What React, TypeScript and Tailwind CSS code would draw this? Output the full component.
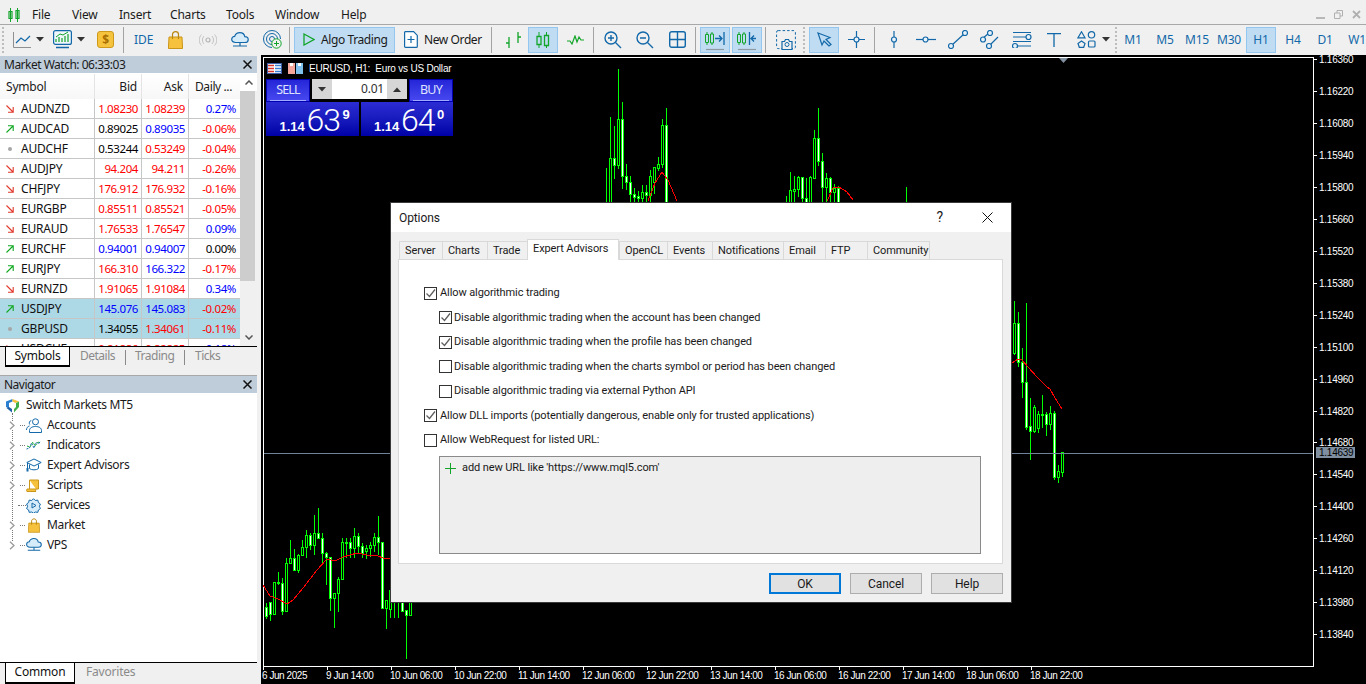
import type { ReactNode } from "react";

type Quote = [string, "up" | "down" | "dot", string, string, string, string, string, string];

const r = "text-[#ff0000]";
const b = "text-[#0000ff]";
const k = "text-black";

const quotes: Quote[] = [
  ["AUDNZD", "down", "1.08230", r, "1.08239", r, "0.27%", b],
  ["AUDCAD", "up", "0.89025", k, "0.89035", b, "-0.06%", r],
  ["AUDCHF", "dot", "0.53244", k, "0.53249", r, "-0.04%", r],
  ["AUDJPY", "down", "94.204", r, "94.211", r, "-0.26%", r],
  ["CHFJPY", "down", "176.912", r, "176.932", r, "-0.16%", r],
  ["EURGBP", "down", "0.85511", r, "0.85521", r, "-0.05%", r],
  ["EURAUD", "down", "1.76533", r, "1.76547", r, "0.09%", b],
  ["EURCHF", "up", "0.94001", b, "0.94007", b, "0.00%", k],
  ["EURJPY", "up", "166.310", r, "166.322", b, "-0.17%", r],
  ["EURNZD", "down", "1.91065", r, "1.91084", r, "0.34%", b],
  ["USDJPY", "up", "145.076", b, "145.083", b, "-0.02%", r],
  ["GBPUSD", "dot", "1.34055", k, "1.34061", r, "-0.11%", r],
  ["USDCHF", "down", "0.81886", r, "0.82885", r, "0.18%", b],
];

// x, wick top, wick bottom, body top, body bottom, white body
type Candle = [number, number, number, number, number, number];

const candles: Candle[] = [
  [266, 603, 619, 607, 616, 1], [270, 602, 621, 602, 614, 1], [274, 582, 615, 582, 614, 0],
  [278, 572, 585, 582, 583, 0], [282, 578, 615, 583, 611, 1], [286, 558, 612, 563, 611, 0],
  [290, 540, 564, 558, 563, 0], [294, 549, 571, 558, 570, 1], [298, 554, 573, 555, 570, 0],
  [302, 540, 556, 547, 555, 0], [306, 530, 558, 535, 547, 0], [310, 533, 550, 535, 545, 1],
  [314, 515, 555, 533, 545, 0], [318, 508, 538, 533, 538, 1], [322, 533, 563, 538, 553, 1],
  [326, 552, 585, 553, 557, 1], [330, 557, 611, 557, 598, 1], [334, 593, 628, 593, 598, 0],
  [338, 577, 612, 579, 593, 0], [342, 538, 580, 542, 579, 0], [346, 538, 558, 542, 543, 0],
  [350, 538, 558, 542, 548, 1], [354, 528, 558, 536, 548, 0], [358, 533, 553, 536, 546, 1],
  [362, 543, 558, 546, 553, 1], [366, 545, 559, 548, 551, 0], [370, 542, 557, 545, 548, 0],
  [374, 533, 552, 537, 545, 0], [378, 516, 555, 537, 542, 1], [382, 542, 609, 542, 608, 1],
  [386, 600, 629, 600, 608, 0], [390, 586, 618, 590, 609, 0], [402, 601, 612, 601, 611, 1],
  [406, 610, 659, 610, 615, 1], [410, 601, 616, 601, 615, 0],
  [610, 117, 210, 158, 210, 0], [614, 126, 179, 158, 165, 1], [618, 69, 169, 119, 165, 0],
  [622, 102, 189, 119, 176, 1], [626, 164, 190, 176, 182, 1], [630, 176, 205, 182, 194, 1],
  [634, 188, 205, 194, 197, 1], [638, 191, 205, 196, 198, 1], [642, 185, 205, 192, 198, 0],
  [646, 185, 205, 192, 195, 1], [650, 170, 205, 176, 195, 0], [654, 167, 194, 167, 182, 0],
  [658, 157, 171, 164, 168, 0], [662, 119, 168, 125, 164, 0], [666, 108, 205, 125, 205, 1],
  [790, 172, 205, 190, 205, 0], [794, 176, 205, 189, 191, 0], [798, 176, 197, 177, 189, 0],
  [802, 177, 205, 177, 198, 1], [806, 178, 205, 198, 205, 1], [810, 176, 205, 177, 205, 0],
  [814, 130, 178, 138, 178, 0], [818, 108, 166, 138, 161, 1], [822, 153, 205, 161, 187, 1],
  [826, 173, 205, 178, 187, 0], [830, 177, 205, 178, 192, 1], [834, 184, 205, 188, 192, 0],
  [838, 186, 205, 188, 205, 1],
  [1014, 301, 355, 323, 353, 0], [1018, 312, 367, 323, 362, 1], [1022, 348, 398, 362, 382, 1],
  [1026, 303, 430, 382, 427, 1], [1030, 398, 460, 426, 431, 1], [1034, 405, 433, 407, 431, 0],
  [1038, 411, 433, 414, 428, 0], [1042, 395, 428, 414, 415, 0], [1046, 412, 436, 414, 424, 1],
  [1050, 406, 430, 413, 424, 0], [1054, 411, 480, 413, 477, 1], [1058, 465, 483, 471, 477, 0],
  [1062, 452, 477, 452, 472, 0],
];

const wicks = [[606, 168, 205], [786, 196, 205], [906, 187, 205], [394, 601, 618], [398, 601, 618]];

const maLines = [
  "263,585 270,596 278,599 287,604 293,600 303,588 317,570 327,559 335,561 343,557 357,553 367,555 378,556 383,558 392,558",
  "648,201 655,183 662,172 668,180 677,201",
  "827,201 833,188 839,187 847,192 853,200",
  "1012,363 1018,359 1022,360 1028,367 1037,377 1047,387 1050,389 1055,398 1062,409",
];

const prices = [
  ["1.16360", 59], ["1.16220", 91], ["1.16080", 123], ["1.15940", 155], ["1.15800", 187],
  ["1.15660", 219], ["1.15520", 251], ["1.15380", 283], ["1.15240", 315], ["1.15100", 347],
  ["1.14960", 379], ["1.14820", 411], ["1.14680", 442], ["1.14540", 474], ["1.14400", 506],
  ["1.14260", 538], ["1.14120", 570], ["1.13980", 602], ["1.13840", 634],
] as const;

const times = [
  ["6 Jun 2025", 262], ["9 Jun 14:00", 326], ["10 Jun 06:00", 390], ["10 Jun 22:00", 454],
  ["11 Jun 14:00", 518], ["12 Jun 06:00", 582], ["12 Jun 22:00", 646], ["13 Jun 14:00", 710],
  ["16 Jun 06:00", 774], ["16 Jun 22:00", 838], ["17 Jun 14:00", 902], ["18 Jun 06:00", 966],
  ["18 Jun 22:00", 1030],
] as const;

const BLUE = "#1268a8";
const GREEN = "#12a52a";

const Ico = ({ w, h = w, children, className }: { w: number; h?: number; children: ReactNode; className?: string }) => (
  <svg width={w} height={h} viewBox={`0 0 ${w} ${h}`} fill="none" className={`shrink-0 ${className ?? ""}`}>
    {children}
  </svg>
);

const Caret = ({ className }: { className?: string }) => (
  <Ico w={8} h={5} className={className}>
    <path d="M0 0h8L4 4.500z" fill="#333" />
  </Ico>
);

const Sep = ({ className }: { className?: string }) => <div className={`w-px h-[26px] shrink-0 bg-[#a3a3a3] ${className ?? ""}`} />;

const Grip = ({ className }: { className?: string }) => (
  <div className={`w-0.5 h-[26px] shrink-0 border-l-2 border-dotted border-[#bdbdbd] ${className ?? ""}`} />
);

const Tool = ({ active, children, className }: { active?: boolean; children: ReactNode; className?: string }) => (
  <div
    className={`w-[30px] h-[26px] shrink-0 flex items-center justify-center border ${
      active ? "bg-[#bfdcf3] border-[#93c7f0]" : "border-transparent"
    } ${className ?? ""}`}
  >
    {children}
  </div>
);

const Candles = () => (
  <Ico w={14} h={16}>
    <path d="M3 0v16M10.500 0v16" stroke={GREEN} />
    <path d="M1 4.500h4v8H1zM8.500 3.500h4v10h-4z" stroke={GREEN} strokeWidth="1.300" fill="#bfdcf3" />
  </Ico>
);

const ShiftIcon = ({ left }: { left?: boolean }) => (
  <Ico w={20} h={22}>
    <path d="M2 3v13M7 3v13" stroke={GREEN} />
    <path d="M.5 5.500h3v8h-3zM5.500 5h3v9h-3z" stroke={GREEN} fill="#bfdcf3" />
    {left ? (
      <path d="M12.500 3v13M19 9.500h-5M17 6.500l-3 3 3 3" stroke={BLUE} strokeWidth="1.300" />
    ) : (
      <path d="M19 3v13M10 9.500h6M14 6.500l3 3-3 3" stroke={BLUE} strokeWidth="1.300" />
    )}
    <path d="M1 20.500h18" stroke="#8f9aa3" strokeWidth="1.200" />
  </Ico>
);

const Magnifier = ({ plus }: { plus?: boolean }) => (
  <Ico w={18} h={18}>
    <circle cx="7" cy="7" r="6" stroke={BLUE} strokeWidth="1.400" />
    <path d="M11.500 11.500l5.500 5.500M4 7h6" stroke={BLUE} strokeWidth="1.400" />
    {plus && <path d="M7 4v6" stroke={BLUE} strokeWidth="1.400" />}
  </Ico>
);

const CloudIcon = ({ w = 18 }: { w?: number }) => (
  <svg width={w} height={16} viewBox="0 0 18 16" fill="none" className="shrink-0">
    <path
      d="M4.500 10.500C2 10.500.7 9 .7 7.300c0-1.800 1.400-3 3-3C4.500 2 6.500.7 8.800.7c2.700 0 4.600 1.800 5 4 1.900 0 3.400 1.300 3.400 3s-1.400 2.800-3.200 2.800z"
      fill="#d7ecfa"
      stroke={BLUE}
      strokeWidth="1.200"
    />
    <path d="M9 10.500v3M2 14h14" stroke={BLUE} strokeWidth="1.200" />
  </svg>
);

const Bag = ({ w = 15, h = 18 }: { w?: number; h?: number }) => (
  <svg width={w} height={h} viewBox="0 0 15 18" className="shrink-0">
    <path d="M1 6h13l.6 11.500H.4z" fill="#f6c23e" stroke="#c9951a" />
    <path d="M4.500 8V3.500C4.500 1.800 5.800.7 7.500.7s3 1.100 3 2.800V8" fill="none" stroke="#b8860b" strokeWidth="1.200" />
  </svg>
);

const Dot = ({ x, y }: { x: number; y: number }) => <circle cx={x} cy={y} r="2.500" stroke={BLUE} strokeWidth="1.200" fill="#e8f2fa" />;

const Toolbar = () => (
  <div className="h-[30px] flex items-center shrink-0 border-t-[1px] border-[#a8a8a8]">
    <Grip className="ml-[2px]" />
    <Ico w={18} h={16} className="ml-[9px]">
      <path d="M.5 0v15.500H18" stroke="#8f8f8f" />
      <path d="M3 11l5-5 4 3 5-5" stroke={BLUE} strokeWidth="1.200" />
    </Ico>
    <Caret className="ml-[5px]" />
    <Ico w={19} h={19} className="ml-[9px]">
      <rect x=".6" y=".6" width="17.800" height="13.800" rx="2" fill="#eef6fc" stroke={BLUE} strokeWidth="1.200" />
      <path d="M3 12V9M6 12V7M9 12V8M12 12V6M15 12V4" stroke={GREEN} strokeWidth="1.200" />
      <path d="M3 7l4-3 3 1 5-3" stroke={GREEN} />
      <path d="M3 17.500h13" stroke={BLUE} strokeWidth="1.500" />
    </Ico>
    <Caret className="ml-[5px]" />
    <div className="ml-[12px] w-[17px] h-[17px] shrink-0 rounded-[3px] bg-[#f6c33f] border border-[#cf9a1c] flex items-center justify-center text-[12px] font-bold text-[#a86f00] leading-none">
      $
    </div>
    <Sep className="ml-[9px]" />
    <span className="ml-[10px] w-[18px] text-[12px] text-[#1268a8] tracking-normal">IDE</span>
    <div className="ml-[16px]">
      <Bag />
    </div>
    <Ico w={18} h={12} className="ml-[16px]">
      <circle cx="9" cy="6" r="2" stroke="#b5b5b5" strokeWidth="1.200" />
      <path d="M5 2c-2 2-2 6 0 8M13 2c2 2 2 6 0 8M2.500 .5c-3 3-3 8 0 11M15.500 .5c3 3 3 8 0 11" stroke="#c2c2c2" />
    </Ico>
    <div className="ml-[14px]">
      <CloudIcon />
    </div>
    <Ico w={19} h={19} className="ml-[14px]">
      <path d="M9 17.500A8.500 8.500 0 1 1 17.500 9M9 14.500A5.500 5.500 0 1 1 14.500 9" stroke={BLUE} />
      <path d="M9 11.500A2.500 2.500 0 1 1 11.500 9" stroke={BLUE} />
      <circle cx="13.500" cy="13.500" r="4.700" fill="#f0f0f0" stroke={GREEN} />
      <path d="M13.500 11v5M11 13.500h5" stroke={GREEN} />
    </Ico>
    <Sep className="ml-[7px]" />
    <div className="ml-[4px] w-[101px] h-[26px] shrink-0 bg-[#bfdcf3] border border-[#93c7f0] flex items-center">
      <Ico w={12} h={13} className="ml-[8px]">
        <path d="M1 1l10 5.500L1 12z" stroke={GREEN} strokeWidth="1.300" />
      </Ico>
      <span className="ml-[6px] tracking-[-0.4px]">Algo Trading</span>
    </div>
    <Ico w={14} h={17} className="ml-[9px]">
      <path d="M1.600.7h8l3.700 3.700v11a1 1 0 0 1-1 1H1.600a1 1 0 0 1-1-1v-14a1 1 0 0 1 1-.700z" stroke={BLUE} strokeWidth="1.200" fill="#fff" />
      <path d="M7 5v7M3.500 8.500h7" stroke={BLUE} strokeWidth="1.200" />
    </Ico>
    <span className="ml-[6px] w-[57px] shrink-0 whitespace-nowrap tracking-[-0.4px]">New Order</span>
    <Sep className="ml-[10px]" />
    <Tool className="ml-[5px]">
      <Ico w={17} h={17}>
        <path d="M5 6v11M2 12h3M14 1v11M14 6h3" stroke={GREEN} strokeWidth="1.300" />
      </Ico>
    </Tool>
    <Tool active className="ml-px">
      <Candles />
    </Tool>
    <Tool className="ml-[2px]">
      <Ico w={17} h={10}>
        <path d="M0 6h3l2 3 3-8 2 6 2-5 2 3h3" stroke={GREEN} strokeWidth="1.200" />
      </Ico>
    </Tool>
    <Sep className="ml-[3px]" />
    <Tool className="ml-[4px]">
      <Magnifier plus />
    </Tool>
    <Tool className="ml-[2px]">
      <Magnifier />
    </Tool>
    <Tool className="ml-[2px]">
      <Ico w={17} h={17}>
        <rect x=".7" y=".7" width="15.600" height="15.600" rx="2" stroke={BLUE} strokeWidth="1.400" />
        <path d="M8.500 1v15M1 8.500h15" stroke={BLUE} strokeWidth="1.400" />
      </Ico>
    </Tool>
    <Sep className="ml-[3px]" />
    <Tool active className="ml-[4px]">
      <ShiftIcon />
    </Tool>
    <Tool active className="ml-[2px]">
      <ShiftIcon left />
    </Tool>
    <Sep className="ml-[3px]" />
    <Tool className="ml-[5px]">
      <Ico w={20} h={20}>
        <rect x=".6" y=".6" width="18.800" height="18" rx="1.500" stroke={BLUE} strokeDasharray="2.500 2" />
        <path d="M6 18.500v-7h2.500l1-2h3l1 2H16v8H6z" fill="#f0f0f0" stroke={BLUE} strokeWidth="1.200" />
        <circle cx="11" cy="14.500" r="2" stroke={BLUE} />
      </Ico>
    </Tool>
    <Grip className="ml-[2px]" />
    <Tool active className="ml-[4px]">
      <Ico w={15} h={15}>
        <path d="M1 1l12 4.500-4 2 5 5-2 1.500-5-5-2 4z" stroke={BLUE} strokeWidth="1.200" />
      </Ico>
    </Tool>
    <Tool className="ml-[2px]">
      <Ico w={17} h={17}>
        <path d="M8.500 0v6M8.500 11v6M0 8.500h6M11 8.500h6" stroke={BLUE} strokeWidth="1.200" />
        <Dot x={8.500} y={8.500} />
      </Ico>
    </Tool>
    <Sep className="ml-[3px]" />
    <Tool className="ml-[4px]">
      <Ico w={8} h={17}>
        <path d="M4 0v17" stroke={BLUE} strokeWidth="1.200" />
        <Dot x={4} y={8.500} />
      </Ico>
    </Tool>
    <Tool className="ml-[2px]">
      <Ico w={20} h={7}>
        <path d="M0 3.500h20" stroke={BLUE} strokeWidth="1.200" />
        <Dot x={9.500} y={3.500} />
      </Ico>
    </Tool>
    <Tool className="ml-[2px]">
      <Ico w={20} h={19}>
        <path d="M4 15L16 4" stroke={BLUE} strokeWidth="1.200" />
        <Dot x={3} y={16} />
        <Dot x={17} y={3} />
      </Ico>
    </Tool>
    <Tool className="ml-[2px]">
      <Ico w={20} h={19}>
        <path d="M2 9l7-6M9 16l9-9" stroke={BLUE} strokeWidth="1.200" />
        <Dot x={3} y={9.500} />
        <Dot x={10} y={3} />
        <Dot x={9} y={16} />
      </Ico>
    </Tool>
    <Tool className="ml-[2px]">
      <Ico w={20} h={17}>
        <path d="M1 1.500h18M1 6h14M1 10.500h18M5 15h14" stroke={BLUE} strokeWidth="1.200" />
        <Dot x={16.500} y={6} />
        <Dot x={3} y={15} />
      </Ico>
    </Tool>
    <Tool className="ml-[2px]">
      <Ico w={14} h={14}>
        <path d="M0 .7h14M7 1v13" stroke={BLUE} strokeWidth="1.300" />
      </Ico>
    </Tool>
    <Tool className="ml-[2px]">
      <Ico w={19} h={17}>
        <path d="M4.500 .8l3.500 6H1z" stroke={BLUE} strokeWidth="1.200" />
        <circle cx="14.500" cy="3.800" r="3.200" stroke={BLUE} strokeWidth="1.200" />
        <path d="M4.500 10l3.500 2.500-1.300 3.800H2.300L1 12.500z" stroke={BLUE} strokeWidth="1.200" />
        <rect x="11.500" y="10" width="6.500" height="6" rx="1" stroke={BLUE} strokeWidth="1.200" />
      </Ico>
    </Tool>
    <Caret className="ml-[1px]" />
    <Grip className="ml-[5px]" />
    <div className="ml-[1px] flex gap-[2px] text-[12px] text-[#1268a8]">
      <Tool>M1</Tool>
      <Tool>M5</Tool>
      <Tool>M15</Tool>
      <Tool>M30</Tool>
      <Tool active>H1</Tool>
      <Tool>H4</Tool>
      <Tool>D1</Tool>
      <Tool>W1</Tool>
    </div>
  </div>
);

const MenuBar = () => (
  <div className="h-[20px] mt-[4px] pt-px flex items-center shrink-0 text-[12px] text-[#1a1a1a]">
    <Ico w={12} h={14} className="ml-[8px]">
      <path d="M2.500 0v14M9.500 0v14" stroke={GREEN} />
      <path d="M1 3.500h3v7H1zM8 2.500h3v8H8z" stroke={GREEN} strokeWidth="1.200" />
    </Ico>
    <span className="ml-[12px] w-[40px]">File</span>
    <span className="w-[47px]">View</span>
    <span className="w-[51px]">Insert</span>
    <span className="w-[56px]">Charts</span>
    <span className="w-[49px]">Tools</span>
    <span className="w-[66px]">Window</span>
    <span>Help</span>
    <div className="ml-auto mr-[5px] flex items-center gap-[9px]">
      <div className="w-[9px] h-[2px] mt-[6px] bg-[#b8b8b8]" />
      <Ico w={9} h={9}>
        <path d="M.5 3h5.500v5.500H.5zM3 3V.5h5.500V6H6" stroke="#b0b0b0" />
      </Ico>
      <Ico w={9} h={9}>
        <path d="M1 1l7 7M8 1L1 8" stroke="#b0b0b0" strokeWidth="1.800" />
      </Ico>
    </div>
  </div>
);

const Arrow = ({ kind }: { kind: Quote[1] }) => {
  if (kind === "dot") return <div className="w-[4px] h-[4px] ml-[2px] mr-[2px] rounded-full bg-[#a6a6a6]" />;
  const color = kind === "up" ? "#10a820" : "#e0392b";
  return (
    <Ico w={8} h={8}>
      {kind === "up" ? (
        <path d="M.5 7.500L7 1M2 .8h5.200V6" stroke={color} strokeWidth="1.100" />
      ) : (
        <path d="M.5.500L7 7M2 7.200h5.200V2" stroke={color} strokeWidth="1.100" />
      )}
    </Ico>
  );
};

const PanelHead = ({ title }: { title: string }) => (
  <div className="h-[17px] bg-[#bfcddb] flex items-center justify-between pl-[4px] pr-[5px] shrink-0 text-[12px] text-[#1a1a1a] tracking-[-0.5px]">
    <span>{title}</span>
    <Ico w={9} h={9}>
      <path d="M.5.500l8 8M8.500.500l-8 8" stroke="#111" strokeWidth="1.500" />
    </Ico>
  </div>
);

const MarketWatch = () => (
  <div className="h-[272px] shrink-0 flex bg-white">
    <div className="w-[240px] overflow-hidden">
      <div className="h-[25px] flex text-[12px] text-[#1a1a1a] bg-gradient-to-b from-white to-[#f7f7f7]">
        <div className="w-[95px] pl-[6px] pt-[4px] border-r border-[#e4e4e4]">Symbol</div>
        <div className="w-[47px] pr-[4px] pt-[4px] text-right border-r border-[#e4e4e4]">Bid</div>
        <div className="w-[47px] pr-[5px] pt-[4px] text-right border-r border-[#e4e4e4]">Ask</div>
        <div className="w-[51px] pl-[6px] pt-[4px] whitespace-nowrap tracking-[-0.4px]">Daily ...</div>
      </div>
      {quotes.map(([sym, dir, bid, bidC, ask, askC, day, dayC], i) => (
        <div
          key={sym}
          className={`h-[20px] flex items-center text-[11.500px] tracking-[-0.4px] border-b border-[#c6c6c6] ${
            i === 10 || i === 11 ? "bg-[#add8e6]" : "bg-white"
          }`}
        >
          <div className="w-[95px] h-full flex items-center pl-[6px] border-r border-[#c6c6c6] text-[#111] text-[12px] tracking-[-0.2px]">
            <Arrow kind={dir} />
            <span className="ml-[7px]">{sym}</span>
          </div>
          <div className={`w-[47px] h-full flex items-center justify-end pr-[3px] border-r border-[#c6c6c6] ${bidC}`}>{bid}</div>
          <div className={`w-[47px] h-full flex items-center justify-end pr-[3px] border-r border-[#c6c6c6] ${askC}`}>{ask}</div>
          <div className={`w-[51px] h-full flex items-center justify-end pr-[4px] ${dayC}`}>{day}</div>
        </div>
      ))}
    </div>
    <div className="w-[17px] bg-[#f0f0f0] flex flex-col shrink-0">
      <div className="h-[17px] flex items-center justify-center bg-white">
        <Ico w={8} h={5}>
          <path d="M.5 4.500L4 1l3.500 3.500" stroke="#555" strokeWidth="1.500" />
        </Ico>
      </div>
      <div className="h-[190px] w-[15px] bg-[#cdcdcd]" />
      <div className="mt-auto h-[17px] flex items-center justify-center">
        <Ico w={8} h={5}>
          <path d="M.5.500L4 4l3.500-3.500" stroke="#555" strokeWidth="1.500" />
        </Ico>
      </div>
    </div>
  </div>
);

const navItems: [string, boolean, ReactNode][] = [
  [
    "Accounts",
    true,
    <Ico w={16} h={15} key="a">
      <circle cx="9.500" cy="3.800" r="3" stroke={BLUE} />
      <path d="M3.500 14.500v-2c0-2.500 2.500-4 6-4s6 1.500 6 4v2zM3.800 6.500a2.500 2.500 0 0 1 1.500-4M.5 12c0-2 1-3.500 3-4" stroke={BLUE} />
    </Ico>,
  ],
  [
    "Indicators",
    true,
    <Ico w={15} h={12} key="i">
      <path d="M.5 10l3-1 2-5 2.500 5 2.500-6 2 2 2-3" stroke={BLUE} strokeDasharray="2 1" />
      <path d="M1 7l3 1 3-5 2 4 3-4 2 1" stroke={GREEN} strokeDasharray="2 1.500" />
    </Ico>,
  ],
  [
    "Expert Advisors",
    true,
    <Ico w={16} h={14} key="e">
      <path d="M8 1L.8 4.500 8 8l7.200-3.500z" stroke={BLUE} />
      <path d="M3.500 6.500v4c1.500 1.800 7.500 1.800 9 0v-4M1.500 5v6" stroke={BLUE} />
      <rect x=".5" y="10" width="2" height="3.500" fill={BLUE} />
    </Ico>,
  ],
  [
    "Scripts",
    true,
    <Ico w={14} h={13} key="s">
      <path d="M3.500 1h9v9H10M3.500 1v9H1c-.500 1-.500 2.500 0 2.500h9c-.500 0-.500-1.500 0-2.500H3.500z" fill="#f6c23e" stroke="#c9951a" />
    </Ico>,
  ],
  [
    "Services",
    false,
    <Ico w={15} h={15} key="sv">
      <path
        d="M7.500.7l1.800 1.800 2.500-.4.600 2.400 2 1.500-1 2.300 1 2.300-2 1.400-.6 2.400-2.500-.4-1.800 1.300-1.800-1.300-2.500.4-.600-2.400-2-1.400 1-2.300-1-2.300 2-1.500.6-2.400 2.500.4z"
        fill="#d7ecfa"
        stroke={BLUE}
      />
      <path d="M6 5v5l4-2.500z" stroke={BLUE} />
    </Ico>,
  ],
  [
    "Market",
    true,
    <div key="m" className="ml-[2px]">
      <Bag w={12} h={15} />
    </div>,
  ],
  ["VPS", true, <CloudIcon key="v" w={16} />],
];

const Navigator = () => (
  <div className="flex-1 bg-white flex flex-col relative pt-[2px] tracking-[-0.35px]">
    <div className="h-[20px] flex items-center pl-[5px]">
      <Ico w={15} h={15}>
        <path d="M7.500 1L1 3.500V9l3 1.500V5l3.500-1.500z" fill="#2a7fd0" />
        <path d="M7.500 1L14 3.500 10.500 5 7.500 3.500z" fill="#f6c23e" />
        <path d="M14 3.500V9l-5 5.500V11l2-2V5z" fill="#3fae49" />
        <path d="M1.500 10l5.500 4.500V11L4 9z" fill="#1f5fa8" />
      </Ico>
      <span className="ml-[6px] text-[12px] text-[#1a1a1a]">Switch Markets MT5</span>
    </div>
    <div className="absolute left-[12px] top-[20px] h-[132px] border-l border-dotted border-[#777]" />
    {navItems.map(([label, exp, icon]) => (
      <div key={label} className="h-[20px] flex items-center text-[12px] text-[#1a1a1a] relative">
        <div className="w-[26px] h-full flex items-center shrink-0 pl-[9px]">
          {exp ? (
            <Ico w={6} h={9} className="bg-white">
              <path d="M1 .8L5 4.500 1 8.200" stroke="#9a9a9a" strokeWidth="1.300" />
            </Ico>
          ) : (
            <div className="w-[6px]" />
          )}
          <div className={`ml-[5px] h-0 border-t border-dotted border-[#777] ${exp ? "w-[5px]" : "w-[11px] -ml-[2px]"}`} />
        </div>
        <div className="w-[21px] shrink-0">{icon}</div>
        <span>{label}</span>
      </div>
    ))}
  </div>
);

const BottomTab = ({ active, label, className }: { active: string; label: string; className?: string }) => (
  <div className="h-[22px] shrink-0 border-t border-black flex items-start pl-[5px] text-[12px] relative bg-[#f0f0f0]">
    <div className="w-[70px] h-[21px] pb-px bg-white border-x border-b-2 border-black flex items-center justify-center text-[#111]">{active}</div>
    <span className={`text-[#8a8a8a] ${className ?? ""}`}>{label}</span>
  </div>
);

const Chart = () => (
  <svg viewBox="261 55 1105 629" width="1105" height="629" className="block" shapeRendering="crispEdges">
    <rect x="263" y="57" width="1050" height="609" fill="none" stroke="#fff" />
    {wicks.map(([x, t, bt]) => (
      <rect key={`${x}-${t}`} x={x} y={t} width="1" height={bt - t} fill="#00ff00" />
    ))}
    <rect x="1011" y="303" width="1" height="92" fill="#0a8a0a" />
    {candles.map(([x, wt, wb, bt, bb, fill]) => (
      <g key={x}>
        <rect x={x} y={wt} width="1" height={wb - wt} fill="#00ff00" />
        <rect x={x - 1} y={bt} width="3" height={Math.max(bb - bt + 1, 2)} fill="#00ff00" />
        {bb - bt > 1 && <rect x={x} y={bt + 1} width="1" height={bb - bt - 1} fill={fill ? "#fff" : "#000"} />}
      </g>
    ))}
    {maLines.map((p) => (
      <polyline key={p} points={p} fill="none" stroke="#ff0000" />
    ))}
    <rect x="264" y="453" width="1049" height="1" fill="#6f8299" />
    <path d="M1059 58h9l-4.500 5z" fill="#7f8fa0" shapeRendering="auto" />
    <g fontFamily="Liberation Sans" fontSize="10" fill="#fff" letterSpacing="-0.25" shapeRendering="auto">
      {prices.map(([label, y]) => (
        <g key={label}>
          <rect x="1313" y={y} width="4" height="1" fill="#fff" />
          <text x="1319" y={y + 4}>
            {label}
          </text>
        </g>
      ))}
      {times.map(([label, x]) => (
        <g key={label}>
          <rect x={x + 1} y="666" width="1" height="4" fill="#fff" />
          <text x={x} y="679" letterSpacing="-0.45">
            {label}
          </text>
        </g>
      ))}
      <rect x="1316" y="447" width="39" height="11" fill="#7f8fa0" />
      <text x="1319" y="456" fill="#000">
        1.14639
      </text>
    </g>
  </svg>
);

const TradePanel = () => (
  <div className="absolute left-[5px] top-[6px] w-[187px] text-white">
    <div className="h-[15px] flex items-center pl-[1px] mb-[3px]">
      <Ico w={15} h={11}>
        <rect x=".5" y=".5" width="14" height="10" fill="#fff" stroke="#3a5fa8" />
        <path d="M1 2.500h6M1 5.500h6M1 8.500h6" stroke="#d9362b" strokeWidth="1.500" />
        <path d="M8 2.500h6M8 5.500h6M8 8.500h6" stroke="#3a7fd0" strokeWidth="1.500" />
      </Ico>
      <Ico w={15} h={11} className="ml-[6px]">
        <rect x="0" y="0" width="7" height="11" fill="#f4a79a" />
        <rect x="2" y="0" width="3" height="3" fill="#fff" />
        <rect x="8" y="0" width="7" height="11" fill="#7fc0ec" />
        <rect x="10" y="0" width="3" height="3" fill="#fff" />
      </Ico>
      <span className="ml-[6px] text-[10px] whitespace-pre font-['Liberation_Sans'] tracking-[-0.2px]">EURUSD, H1:  Euro vs US Dollar</span>
    </div>
    <div className="flex h-[23px]">
      <div className="w-[44px] bg-gradient-to-b from-[#2525d8] to-[#4848f0] border border-[#0000b0] flex flex-col items-center">
        <span className="text-[12.500px] tracking-[-0.8px] leading-[20px] text-[#dfe3ff] border-b border-[#a0a8ff] w-[36px] text-center h-[21px]">SELL</span>
      </div>
      <div className="w-[95px] h-[20px] ml-[2px] bg-[#d6d6d6] flex items-center">
        <div className="w-[20px] flex justify-center">
          <Caret />
        </div>
        <div className="w-[55px] h-full bg-white text-[12px] text-[#303030] text-right pr-[3px] leading-[20px]">0.01</div>
        <div className="w-[20px] flex justify-center">
          <Caret className="rotate-180" />
        </div>
      </div>
      <div className="w-[44px] ml-[2px] bg-gradient-to-b from-[#2525d8] to-[#4848f0] border border-[#0000b0] flex flex-col items-center">
        <span className="text-[12.500px] tracking-[-0.8px] leading-[20px] text-[#dfe3ff] border-b border-[#a0a8ff] w-[36px] text-center h-[21px]">BUY</span>
      </div>
    </div>
    <div className="flex gap-[2px]">
      {[
        ["63", "9"],
        ["64", "0"],
      ].map(([big, small]) => (
        <div key={big} className="w-[93px] h-[34px] bg-gradient-to-b from-[#2c2cd4] to-[#0000a6] flex items-start pl-[13.500px]">
          <span className="text-[13px] font-bold mt-[15px] w-[27px] font-['Liberation_Sans'] tracking-normal">1.14</span>
          <span className="text-[32px] font-light font-['Roboto'] leading-[36px] tracking-[-1px] w-[36px]">{big}</span>
          <span className="text-[13px] font-bold mt-[3px] font-['Liberation_Sans'] tracking-normal">{small}</span>
        </div>
      ))}
    </div>
  </div>
);

const tabs: [string, string, string?][] = [
  ["Server", "w-[43px]"],
  ["Charts", "w-[45px]"],
  ["Trade", "w-[40px]"],
  ["Expert Advisors", "w-[92px]", "on"],
  ["OpenCL", "w-[48px]"],
  ["Events", "w-[45px]"],
  ["Notifications", "w-[71px]"],
  ["Email", "w-[42px]"],
  ["FTP", "w-[42px]"],
  ["Community", "w-[63px]"],
];

const Check = ({ on }: { on?: boolean }) => (
  <div className="w-[13px] h-[13px] shrink-0 border border-[#333] bg-white flex items-center justify-center">
    {on && (
      <Ico w={11} h={11}>
        <path d="M1.500 5.500l3 3 5.500-7" stroke="#5f5f5f" strokeWidth="1.300" />
      </Ico>
    )}
  </div>
);

const Option = ({ on, label, inner }: { on?: boolean; label: string; inner?: boolean }) => (
  <div className={`h-[24.500px] flex items-center ${inner ? "pl-[40px] gap-[2px]" : "pl-[25px] gap-[3px]"}`}>
    <Check on={on} />
    <span className="whitespace-nowrap">{label}</span>
  </div>
);

const DialogButton = ({ label, primary }: { label: string; primary?: boolean }) => (
  <div
    className={`w-[72px] h-[21px] bg-[#e1e1e1] flex items-center justify-center ${
      primary ? "border-2 border-[#0078d7]" : "border border-[#adadad]"
    }`}
  >
    {label}
  </div>
);

const OptionsDialog = () => (
  <div className="absolute left-[130px] top-[148px] w-[620px] h-[399px] bg-[#f0f0f0] flex flex-col font-['Roboto'] text-[11px] tracking-[-0.1px] text-[#1a1a1a] shadow-[0_0_0_1px_#3a3a3a]">
    <div className="h-[29px] bg-white flex items-center shrink-0 pl-[8px]">
      <span className="text-[12px]">Options</span>
      <span className="ml-auto mr-[39px] text-[14px]">?</span>
      <Ico w={11} h={11} className="mr-[18px]">
        <path d="M.5.500l10 10M10.500.500l-10 10" stroke="#111" />
      </Ico>
    </div>
    <div className="flex h-[27px] items-end pl-[8px] shrink-0 relative z-10">
      {tabs.map(([label, width, on]) => (
        <div
          key={label}
          className={`${width} shrink-0 pl-[5px] flex items-center whitespace-nowrap border-t border-l border-[#d9d9d9] last:border-r ${
            on ? "h-[21px] bg-white pb-[2px] border-r -mb-px" : "h-[18px] bg-[#f0f0f0] pt-px"
          }`}
        >
          {label}
        </div>
      ))}
    </div>
    <div className="ml-[7px] mr-[8px] h-[305px] shrink-0 bg-white border border-[#d9d9d9] pt-[21px]">
      <Option on label="Allow algorithmic trading" />
      <Option on inner label="Disable algorithmic trading when the account has been changed" />
      <Option on inner label="Disable algorithmic trading when the profile has been changed" />
      <Option inner label="Disable algorithmic trading when the charts symbol or period has been changed" />
      <Option inner label="Disable algorithmic trading via external Python API" />
      <Option on label="Allow DLL imports (potentially dangerous, enable only for trusted applications)" />
      <Option label="Allow WebRequest for listed URL:" />
      <div className="ml-[40px] w-[542px] h-[98px] mt-[3px] bg-[#eeeeee] border border-[#8a8a8a] flex items-start pt-[3px] pl-[5px]">
        <Ico w={11} h={11} className="mt-[3px]">
          <path d="M5.500 0v11M0 5.500h11" stroke={GREEN} />
        </Ico>
        <span className="ml-[6px]">add new URL like 'https://www.mql5.com'</span>
      </div>
    </div>
    <div className="flex justify-end gap-[9px] pr-[8px] mt-[9px] text-[12px]">
      <DialogButton primary label="OK" />
      <DialogButton label="Cancel" />
      <DialogButton label="Help" />
    </div>
  </div>
);

export default function App() {
  return (
    <div className="w-[1366px] h-[684px] overflow-hidden flex flex-col bg-[#f0f0f0] font-['Noto_Sans',sans-serif] text-[12px] text-[#1a1a1a] tracking-[-0.2px]">
      <MenuBar />
      <Toolbar />
      <div className="flex flex-1 min-h-0 mt-px">
        <div className="w-[257px] shrink-0 flex flex-col pt-[1px]">
          <PanelHead title="Market Watch: 06:33:03" />
          <div className="h-[1px] bg-white shrink-0" />
          <MarketWatch />
          <div className="h-[29px] shrink-0 border-t border-black flex items-start pl-[5px] text-[12px] text-[#8a8a8a] bg-[#f0f0f0] tracking-[-0.5px]">
            <div className="w-[65px] h-[20px] bg-white border-x border-b-2 border-black text-[#111] flex items-center justify-center tracking-[-0.2px]">Symbols</div>
            <span className="ml-[10px] w-[36px]">Details</span>
            <div className="w-px h-[15px] bg-[#8a8a8a] ml-[9px] mt-[3px]" />
            <span className="ml-[9px] w-[40px]">Trading</span>
            <div className="w-px h-[15px] bg-[#8a8a8a] ml-[9px] mt-[3px]" />
            <span className="ml-[10px]">Ticks</span>
          </div>
          <div className="h-px bg-[#a8a8a8] shrink-0" />
          <PanelHead title="Navigator" />
          <Navigator />
          <BottomTab active="Common" label="Favorites" className="ml-[11px]" />
        </div>
        <div className="relative ml-[4px] flex-1 bg-black">
          <Chart />
          <TradePanel />
          <OptionsDialog />
        </div>
      </div>
    </div>
  );
}
